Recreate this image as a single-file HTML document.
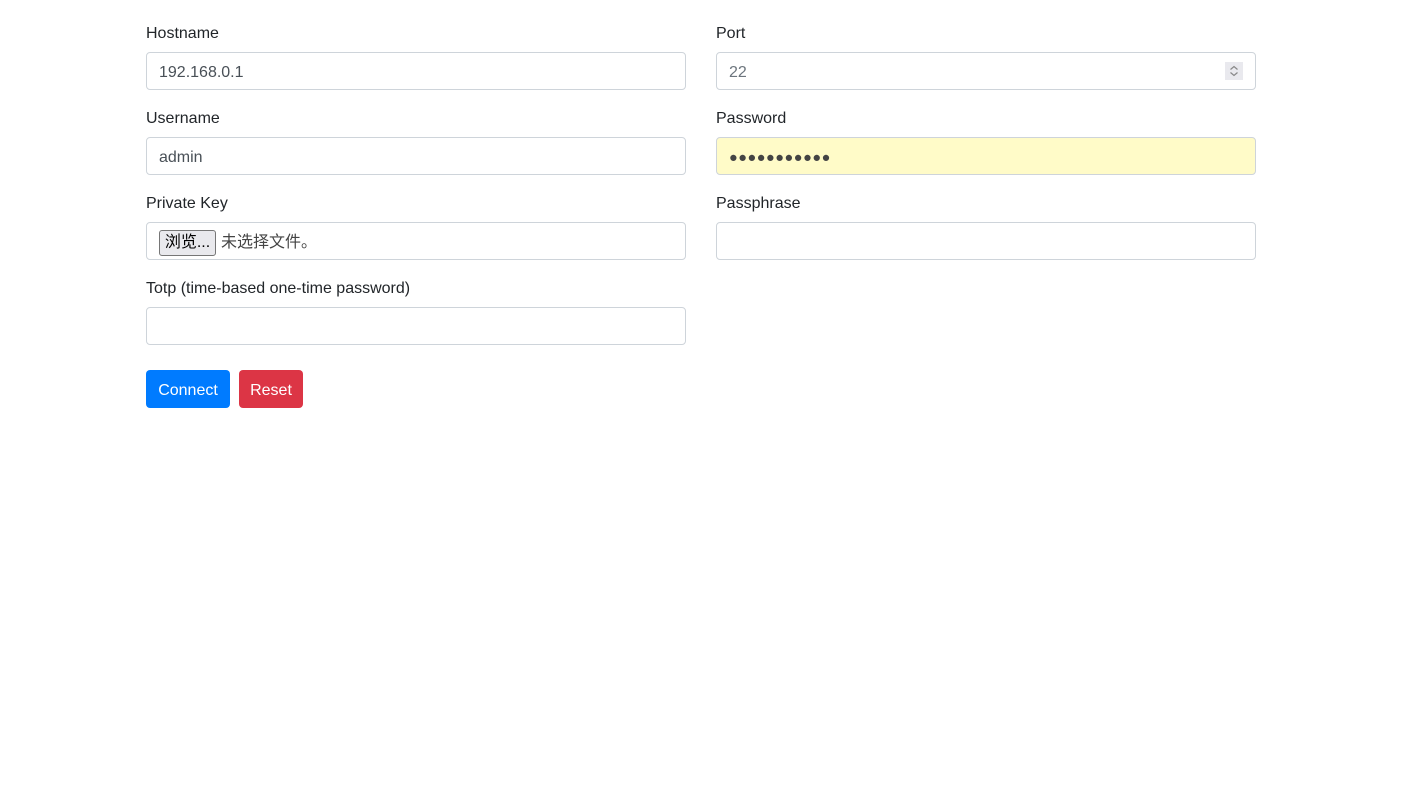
<!DOCTYPE html>
<html><head><meta charset="utf-8"><style>
body{margin:0;background:#fff;font-family:"Liberation Sans","Noto Sans CJK SC",sans-serif;color:#212529;font-size:16px}
.f{position:absolute;width:540px}
.l{position:absolute;top:0;left:0;line-height:20px}
.i{position:absolute;top:28px;left:0;width:538px;height:36px;border:1px solid #ced4da;border-radius:4px;background:#fff;box-sizing:content-box}
.i span{position:absolute;left:12px;top:10px;color:#495057;font-size:16px;line-height:20px}
.btn{position:absolute;top:370px;height:38px;border-radius:4px;color:#fff;font-size:16px;line-height:20px;box-sizing:border-box;padding-top:11px;text-align:center}
</style></head><body>
<div class="f" style="left:146px;top:24px"><div class="l">Hostname</div><div class="i"><span>192.168.0.1</span></div></div>
<div class="f" style="left:716px;top:24px"><div class="l">Port</div><div class="i"><span style="color:#6c757d">22</span>
<svg style="position:absolute;right:12px;top:9px" width="18" height="18"><rect width="18" height="18" fill="#e9e9ee"/><path d="M5.5 7.5L9 4.5L12.5 7.5M5.5 10.5L9 13.5L12.5 10.5" fill="none" stroke="#888" stroke-width="1.2"/></svg></div></div>
<div class="f" style="left:146px;top:109px"><div class="l">Username</div><div class="i"><span>admin</span></div></div>
<div class="f" style="left:716px;top:109px"><div class="l">Password</div><div class="i" style="background:#fffbc8"><span style="color:#444;font-size:14.5px;letter-spacing:0.5px">●●●●●●●●●●●</span></div></div>
<div class="f" style="left:146px;top:194px"><div class="l">Private Key</div><div class="i">
<div style="position:absolute;left:12px;top:7px;width:57px;height:26px;border:1px solid #767676;border-radius:3px;background:#e9e9ed;font-size:16px;line-height:24px;text-align:center;color:#000;box-sizing:border-box">浏览...</div>
<span style="left:74px;top:10px;color:#444">未选择文件。</span></div></div>
<div class="f" style="left:716px;top:194px"><div class="l">Passphrase</div><div class="i"></div></div>
<div class="f" style="left:146px;top:279px"><div class="l">Totp (time-based one-time password)</div><div class="i"></div></div>
<div class="btn" style="left:146px;width:84px;background:#007bff">Connect</div>
<div class="btn" style="left:239px;width:64px;background:#dc3545">Reset</div>
</body></html>
